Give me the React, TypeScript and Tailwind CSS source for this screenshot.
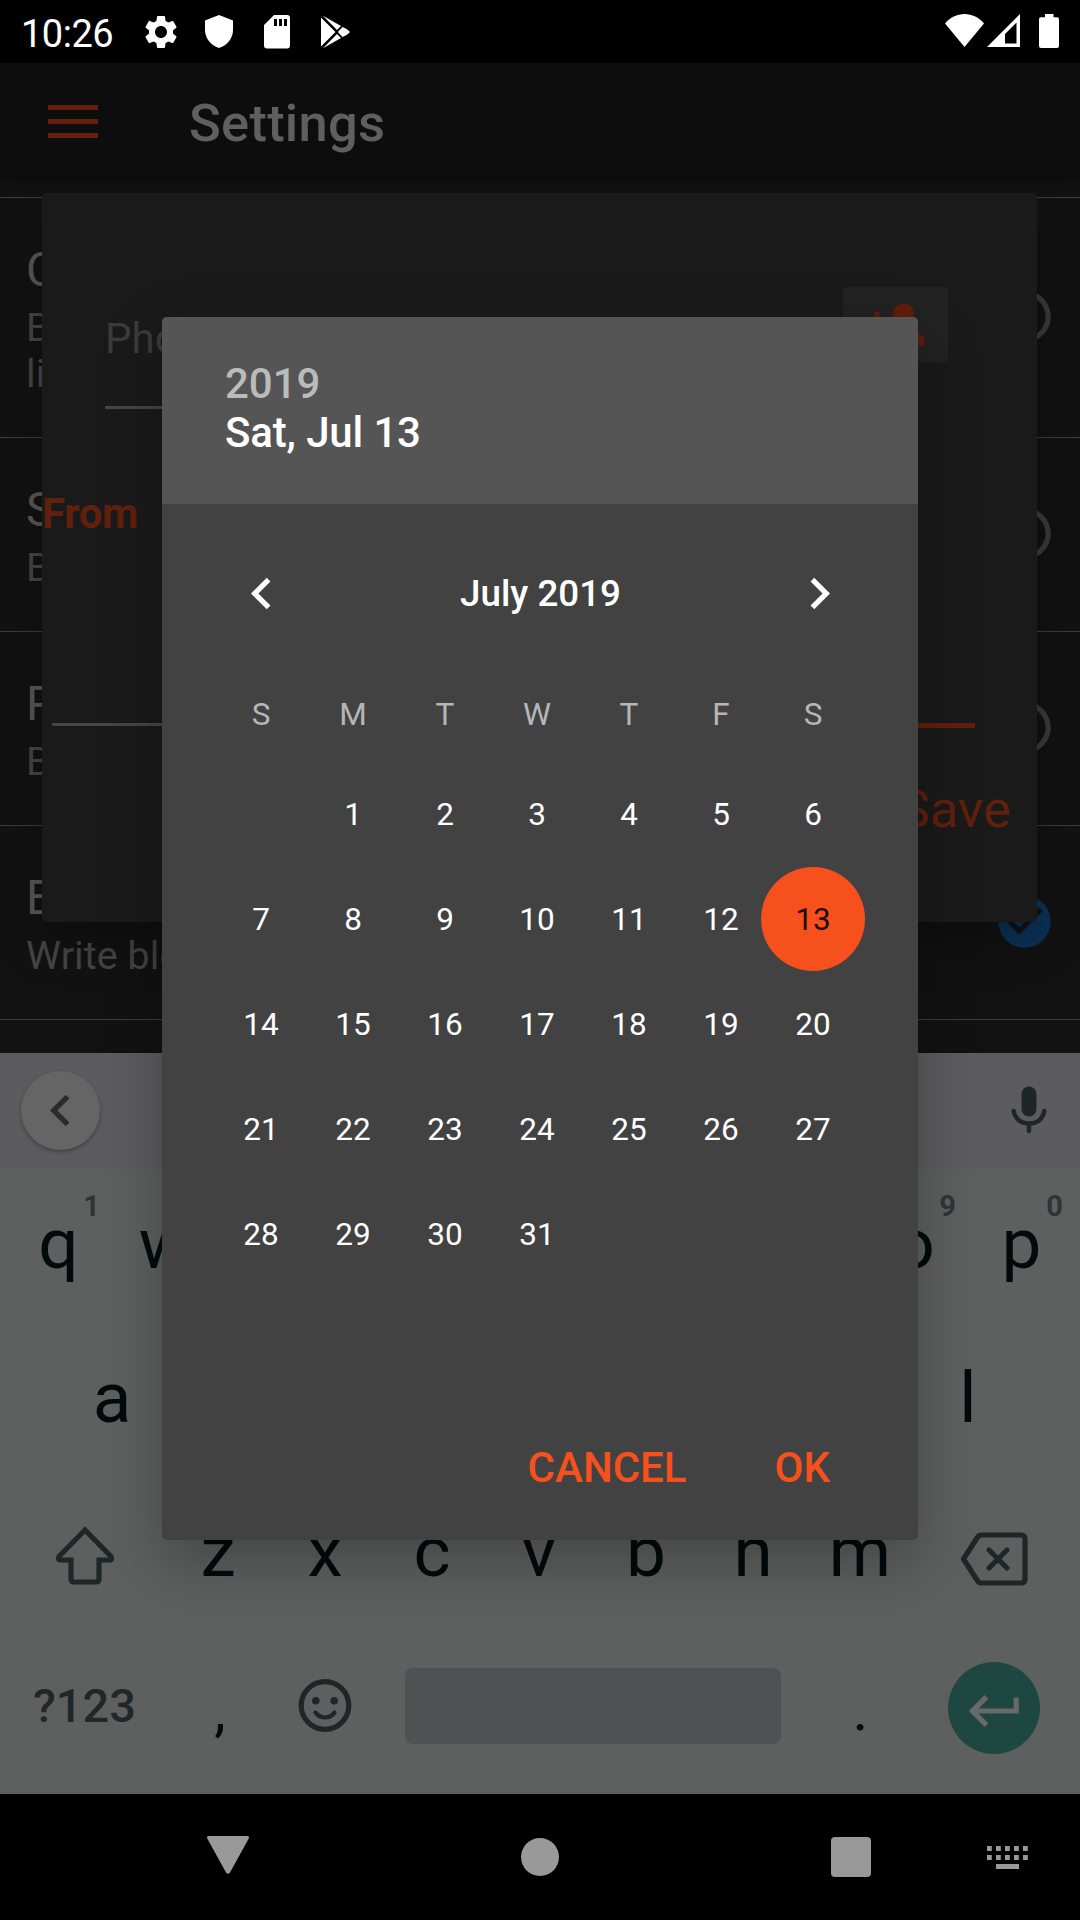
import type { ReactNode } from "react";
import {
  MdCheckCircle,
  MdChevronLeft,
  MdChevronRight,
  MdPersonAdd,
  MdRadioButtonUnchecked,
  MdSettings,
} from "react-icons/md";

function StatusBar() {
  return (
    <header className="flex h-[63px] shrink-0 items-start bg-black text-white">
      <span className="ml-[21px] mt-[9px] w-[120px] text-[38px] leading-[50px] tracking-[-0.5px]">10:26</span>
      <MdSettings className="mt-[12px] size-[40px]" />
      <svg className="ml-[24px] mt-[15px]" width="28" height="33" viewBox="0 0 28 33" fill="currentColor">
        <path d="M14 0 28 5.5V15c0 8-5.5 15.500-14 18C5.500 30.500 0 23 0 15V5.500z" />
      </svg>
      <svg className="ml-[31px] mt-[15px]" width="26" height="34" viewBox="0 0 26 34" fill="currentColor">
        <path fillRule="evenodd" d="M10 0h13a3 3 0 0 1 3 3v27.500a3 3 0 0 1-3 3H3a3 3 0 0 1-3-3V10zM10 4v7h3V4zM15 4v7h3V4zM20 4v7h3V4z" />
      </svg>
      <svg className="ml-[31px] mt-[15px]" width="30" height="34" viewBox="0 0 30 34" fill="currentColor">
        <path d="M0 2.500V31.500L14.500 17zM2 .8 16 15 20 11zM2 33.200 16 19 20 23zM21.500 12 26 14.300 29 17 26 19.700 21.500 22 16.800 17z" />
      </svg>
      <svg className="ml-auto mt-[14px]" width="39" height="33" viewBox="0 0 39 33" fill="currentColor">
        <path d="M0 9.500C5 3.500 12 0 19.500 0S34 3.500 39 9.500L19.500 33z" />
      </svg>
      <svg className="ml-[3px] mt-[14px]" width="33" height="33" viewBox="0 0 33 33" fill="currentColor">
        <path fillRule="evenodd" d="M33 0V33H0zM29.500 8.500 18 20V29.500H29.500z" />
      </svg>
      <svg className="mr-[21px] ml-[19px] mt-[14px]" width="20" height="34" viewBox="0 0 20 34" fill="currentColor">
        <path d="M6 0h8.500v3.300H18a2 2 0 0 1 2 2V32a2 2 0 0 1-2 2H2a2 2 0 0 1-2-2V5.300a2 2 0 0 1 2-2h4z" />
      </svg>
    </header>
  );
}

const settings = [
  { title: "Calls", lines: ["Block calls from", "list"], on: false, height: "h-[240px]" },
  { title: "SMS", lines: ["Block messages"], on: false, height: "h-[194px]" },
  { title: "Private", lines: ["Block private numbers"], on: false, height: "h-[194px]" },
  { title: "Events", lines: ["Write blocked"], on: true, height: "h-[195px]" },
];

function SettingsPage() {
  return (
    <main className="flex h-[990px] shrink-0 flex-col bg-[#121212]">
      <div className="flex h-[118px] shrink-0 items-center bg-[#0d0d0d] pt-[2px] shadow-[0_2px_8px_rgba(0,0,0,0.2)]">
        <div className="ml-[48px] flex w-[50px] flex-col gap-[9px] pb-[4px]">
          <div className="h-[5px] bg-[#641f0d]" />
          <div className="h-[5px] bg-[#641f0d]" />
          <div className="h-[5px] bg-[#641f0d]" />
        </div>
        <h1 className="ml-[91px] text-[52.5px] leading-[60px] font-medium tracking-[0.25px] text-[#5f5f5f]">Settings</h1>
      </div>
      <div className="mt-[16px]">
        {settings.map((s, i) => (
          <div
            key={s.title}
            className={`${s.height} flex items-start justify-between border-t border-[#3c3c3c] ${i === 3 ? "border-b" : ""} pl-[26px] pr-[24.5px]`}
          >
            <div className="pt-[44px]">
              <div className="text-[47.25px] leading-[56px] text-[#585858]">{s.title}</div>
              <div className="pt-[7px] text-[39.4px] leading-[46px] tracking-[0.1px] text-[#464646]">
                {s.lines.map((line) => (
                  <div key={line}>{line}</div>
                ))}
              </div>
            </div>
            <div className="flex h-full items-center pb-[2px]">
              {s.on ? (
                <MdCheckCircle className="size-[63px] text-[#0b3156]" />
              ) : (
                <MdRadioButtonUnchecked className="size-[63px] text-[#3a3a3a]" />
              )}
            </div>
          </div>
        ))}
      </div>
    </main>
  );
}

function NumberDialog() {
  return (
    <section className="absolute top-[193px] left-[42px] flex h-[729px] w-[995px] flex-col rounded-[5px] bg-[#1a1a1a] shadow-[0_18px_50px_rgba(0,0,0,0.3)]">
      <div className="mt-[94px] flex items-start justify-between pr-[89px] pl-[63px]">
        <div className="w-[600px] border-b-[3px] border-[#464646] pt-[27px] pb-[42px] text-[42px] leading-[50px] text-[#3b3b3b]">
          Phone number
        </div>
        <div className="flex h-[75px] w-[105px] items-center justify-center rounded-[4px] bg-[#222222]">
          <MdPersonAdd className="size-[63px] text-[#601c0b]" />
        </div>
      </div>
      <div className="mt-[80px] text-[42px] leading-[50px] font-bold tracking-[-0.3px] text-[#611f0d]">From</div>
      <div className="mt-[184px] flex items-start justify-between pr-[62px] pl-[10px]">
        <div className="h-[3px] w-[420px] bg-[#464646]" />
        <div className="h-[5px] w-[420px] bg-[#611f0d]" />
      </div>
      <div className="mt-[51px] pr-[26px] text-right text-[52.5px] leading-[60px] text-[#611f0d]">Save</div>
    </section>
  );
}

function Key({ label, hint }: { label: string; hint?: string }) {
  return (
    <div className="relative flex w-[107px] items-center justify-center pb-[5px] text-[71px] leading-[80px] text-[#020a0d]">
      {label}
      {hint && (
        <span className="absolute top-[22px] left-[76px] w-[21px] text-center text-[29px] leading-[30px] font-bold text-[#303436]">
          {hint}
        </span>
      )}
    </div>
  );
}

function WideKey({ children }: { children: ReactNode }) {
  return <div className="flex w-[160px] items-center justify-center">{children}</div>;
}

function Keyboard() {
  return (
    <section className="flex h-[741px] shrink-0 flex-col bg-[#5e605f]">
      <div className="flex h-[116px] shrink-0 items-center justify-between bg-[#5c5c5e] pr-[33px] pb-[2px] pl-[21px]">
        <div className="flex size-[79px] items-center justify-center rounded-full bg-[#656565] shadow-[0_2px_4px_rgba(0,0,0,0.3)]">
          <MdChevronLeft className="size-[63px] text-[#2b2b2b]" />
        </div>
        <svg width="36" height="48" viewBox="0 0 36 48" fill="none" className="text-[#1e2629]">
          <rect x="10.500" y="0.500" width="15" height="30" rx="7.500" fill="currentColor" />
          <path d="M2.700 25C4 33 10 37.500 18 37.500S32 33 33.300 25M18 38V45" stroke="currentColor" strokeWidth="4.500" strokeLinecap="round" />
        </svg>
      </div>
      <div className="flex h-[154px] justify-center">
        {"qwertyuiop".split("").map((c, i) => (
          <Key key={c} label={c} hint={String((i + 1) % 10)} />
        ))}
      </div>
      <div className="flex h-[154px] justify-center">
        {"asdfghjkl".split("").map((c) => (
          <Key key={c} label={c} />
        ))}
      </div>
      <div className="flex h-[154px] justify-center pr-[2px]">
        <WideKey>
          <svg width="60" height="60" viewBox="0 0 60 60" fill="none" stroke="#1f2629" strokeWidth="5.200" strokeLinejoin="round" className="mt-[4px]">
            <path d="M30 4 4 30.500Q2 34 6 34H16V53Q16 56 19 56H41Q44 56 44 53V34H54Q58 34 56 30.500z" strokeLinejoin="miter" />
          </svg>
        </WideKey>
        {"zxcvbnm".split("").map((c) => (
          <Key key={c} label={c} />
        ))}
        <WideKey>
          <svg width="68" height="54" viewBox="0 0 68 54" fill="none" stroke="#1f2629" strokeWidth="5.200" strokeLinejoin="round" strokeLinecap="round" className="mt-[9px]">
            <path d="M3.500 27 17 6Q18.500 3 22 3H61Q65 3 65 7V47Q65 51 61 51H22Q18.500 51 17 48z" />
            <path d="M29 18 47 36M47 18 29 36" />
          </svg>
        </WideKey>
      </div>
      <div className="flex h-[163px] justify-center pr-[2px] pb-[13px]">
        <WideKey>
          <span className="text-[47px] leading-[56px] font-medium text-[#212729]">?123</span>
        </WideKey>
        <div className="flex w-[107px] items-center justify-center pt-[8px] pl-[4px] text-[58px] leading-[60px] text-[#020a0d]">,</div>
        <div className="flex w-[107px] items-center justify-center">
          <svg width="54" height="54" viewBox="0 0 54 54" fill="none" stroke="#1f2629">
            <circle cx="27" cy="26.500" r="23.800" strokeWidth="5.200" />
            <circle cx="17.800" cy="21.700" r="3.800" fill="#1f2629" stroke="none" />
            <circle cx="36.200" cy="21.700" r="3.800" fill="#1f2629" stroke="none" />
            <path d="M17.500 33.500Q21 38.500 27 38.500T36.500 33.500" strokeWidth="4.200" strokeLinecap="round" />
          </svg>
        </div>
        <div className="flex w-[428px] items-center justify-center">
          <div className="h-[76px] w-[376px] rounded-[8px] bg-[#505153]" />
        </div>
        <div className="flex w-[107px] items-center justify-center pt-[8px] pl-[1px] text-[60px] leading-[60px] text-[#020a0d]">.</div>
        <WideKey>
          <div className="mt-[3px] flex size-[92px] items-center justify-center rounded-full bg-[#1f4741]">
            <svg width="50" height="32" viewBox="0 0 50 32" fill="none" stroke="#696969" strokeWidth="5.200" className="mt-[6px]">
              <path d="M17.500 1.800 3.500 16 17.500 30.200M4 16H47.200V2.500" />
            </svg>
          </div>
        </WideKey>
      </div>
    </section>
  );
}

function NavBar() {
  return (
    <nav className="flex h-[126px] shrink-0 items-center bg-black text-[#999999]">
      <svg className="mb-[5px] ml-[207px]" width="42" height="38" viewBox="0 0 42 38" fill="currentColor">
        <path d="M2 0H40Q43 0 41.500 3L23 36.500Q21 39 19 36.500L.5 3Q-1 0 2 0z" />
      </svg>
      <div className="ml-[272px] size-[38px] rounded-full bg-[#999999]" />
      <div className="ml-[272px] h-[40px] w-[40px] rounded-[4px] bg-[#999999]" />
      <svg className="ml-[116px]" width="41" height="23" viewBox="0 0 41 23" fill="currentColor">
        {[0, 9, 18, 27, 36].map((x) => (
          <path key={x} d={`M${x} 0h4.800v5h-4.800zM${x} 9h4.800v5h-4.800z`} />
        ))}
        <path d="M9 18H32V23H9z" />
      </svg>
    </nav>
  );
}

function DatePicker() {
  return (
    <section className="absolute top-[317px] left-[162px] flex h-[1223px] w-[756px] flex-col overflow-hidden rounded-[5px] bg-[#424242] text-white">
      <div className="h-[187px] bg-[#555555] pt-[42px] pl-[63px] text-[42px] leading-[49px] font-medium">
        <div className="text-[#bbbbbb]">2019</div>
        <div className="tracking-[-0.15px]">Sat, Jul 13</div>
      </div>
      <div className="flex h-[180px] items-center justify-between pr-[67px] pl-[68px]">
        <MdChevronLeft className="mb-[2px] size-[63px]" />
        <span className="text-[36.75px] leading-[44px] font-medium">July 2019</span>
        <MdChevronRight className="mb-[2px] size-[63px]" />
      </div>
      <div className="ml-[53px] grid h-[60px] w-[644px] grid-cols-7 items-center pt-[2px] text-center text-[31.5px] leading-[40px] text-[#b6b6b6]">
        {["S", "M", "T", "W", "T", "F", "S"].map((d, i) => (
          <span key={i}>{d}</span>
        ))}
      </div>
      <div className="mt-[18px] ml-[53px] grid w-[644px] auto-rows-[105px] grid-cols-7 text-[31.5px]">
        <span />
        {Array.from({ length: 31 }, (_, i) => i + 1).map((day) => (
          <div key={day} className="flex items-center justify-center">
            {day === 13 ? (
              <span className="mb-[1px] flex size-[104px] shrink-0 items-center justify-center rounded-full bg-[#f6511d] pt-[1px] text-[#200a04]">
                13
              </span>
            ) : (
              day
            )}
          </div>
        ))}
      </div>
      <div className="mt-auto flex h-[145px] items-center justify-end pr-[88px] text-[42px] leading-[50px] font-medium text-[#f6511d]">
        <span>CANCEL</span>
        <span className="ml-[88px]">OK</span>
      </div>
    </section>
  );
}

export default function App() {
  return (
    <div className="relative flex h-[1920px] w-[1080px] flex-col overflow-hidden bg-black font-['Roboto',sans-serif]">
      <StatusBar />
      <SettingsPage />
      <NumberDialog />
      <div className="relative flex flex-col">
        <Keyboard />
        <NavBar />
      </div>
      <div className="absolute top-[317px] left-[162px] h-[1223px] w-[756px] rounded-[5px] shadow-[0_22px_60px_rgba(0,0,0,0.28)]" />
      <DatePicker />
    </div>
  );
}
